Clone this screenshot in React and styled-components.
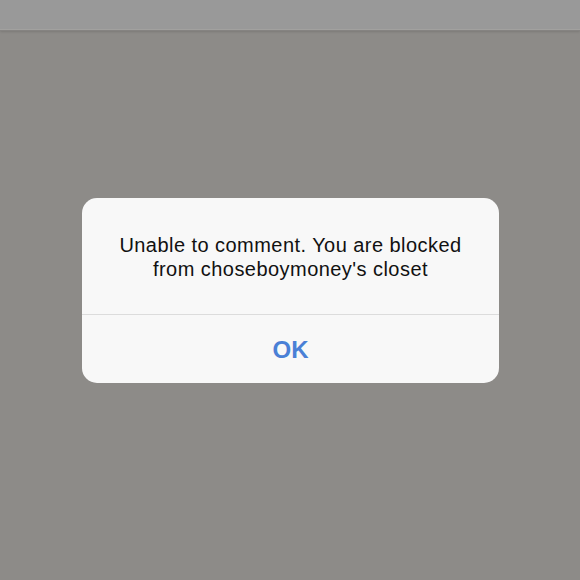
import React from 'react';
import styled, { createGlobalStyle } from 'styled-components';

const GlobalStyle = createGlobalStyle`
  html, body {
    margin: 0;
    padding: 0;
    background: #8d8b88;
  }
  body {
    font-family: "Liberation Sans", Arial, sans-serif;
  }
`;

const Screen = styled.div`
  width: 580px;
  height: 580px;
  display: flex;
  flex-direction: column;
  background: #8d8b88;
  overflow: hidden;
`;

const TopBar = styled.div`
  height: 29px;
  flex-shrink: 0;
  background: #999999;
  border-bottom: 1px solid #a2a19f;
  box-shadow: 0 1px 0 #858381, 0 2px 2px rgba(0, 0, 0, 0.12);
`;

const Stage = styled.div`
  flex: 1;
  display: flex;
  justify-content: center;
  padding-top: 168px;
  padding-left: 1px;
`;

const Alert = styled.div`
  width: 417px;
  height: 185px;
  background: #f8f8f8;
  border-radius: 15px;
  display: flex;
  flex-direction: column;
  overflow: hidden;
`;

const Message = styled.div`
  height: 117px;
  display: flex;
  align-items: center;
  justify-content: center;
  text-align: center;
  padding: 2px 20px 0;
  box-sizing: border-box;
  font-size: 20px;
  line-height: 24px;
  letter-spacing: 0.45px;
  color: #111111;
  border-bottom: 1px solid #dcdcdc;
`;

const Action = styled.button`
  flex: 1;
  border: none;
  background: transparent;
  font-family: "Liberation Sans", Arial, sans-serif;
  font-size: 24px;
  font-weight: 700;
  color: #4a80d6;
  padding: 2px 0 0;
  cursor: pointer;
`;

export default function App() {
  return (
    <>
      <GlobalStyle />
      <Screen>
        <TopBar />
        <Stage>
          <Alert>
            <Message>
              Unable to comment. You are blocked
              <br />
              from choseboymoney's closet
            </Message>
            <Action>OK</Action>
          </Alert>
        </Stage>
      </Screen>
    </>
  );
}
